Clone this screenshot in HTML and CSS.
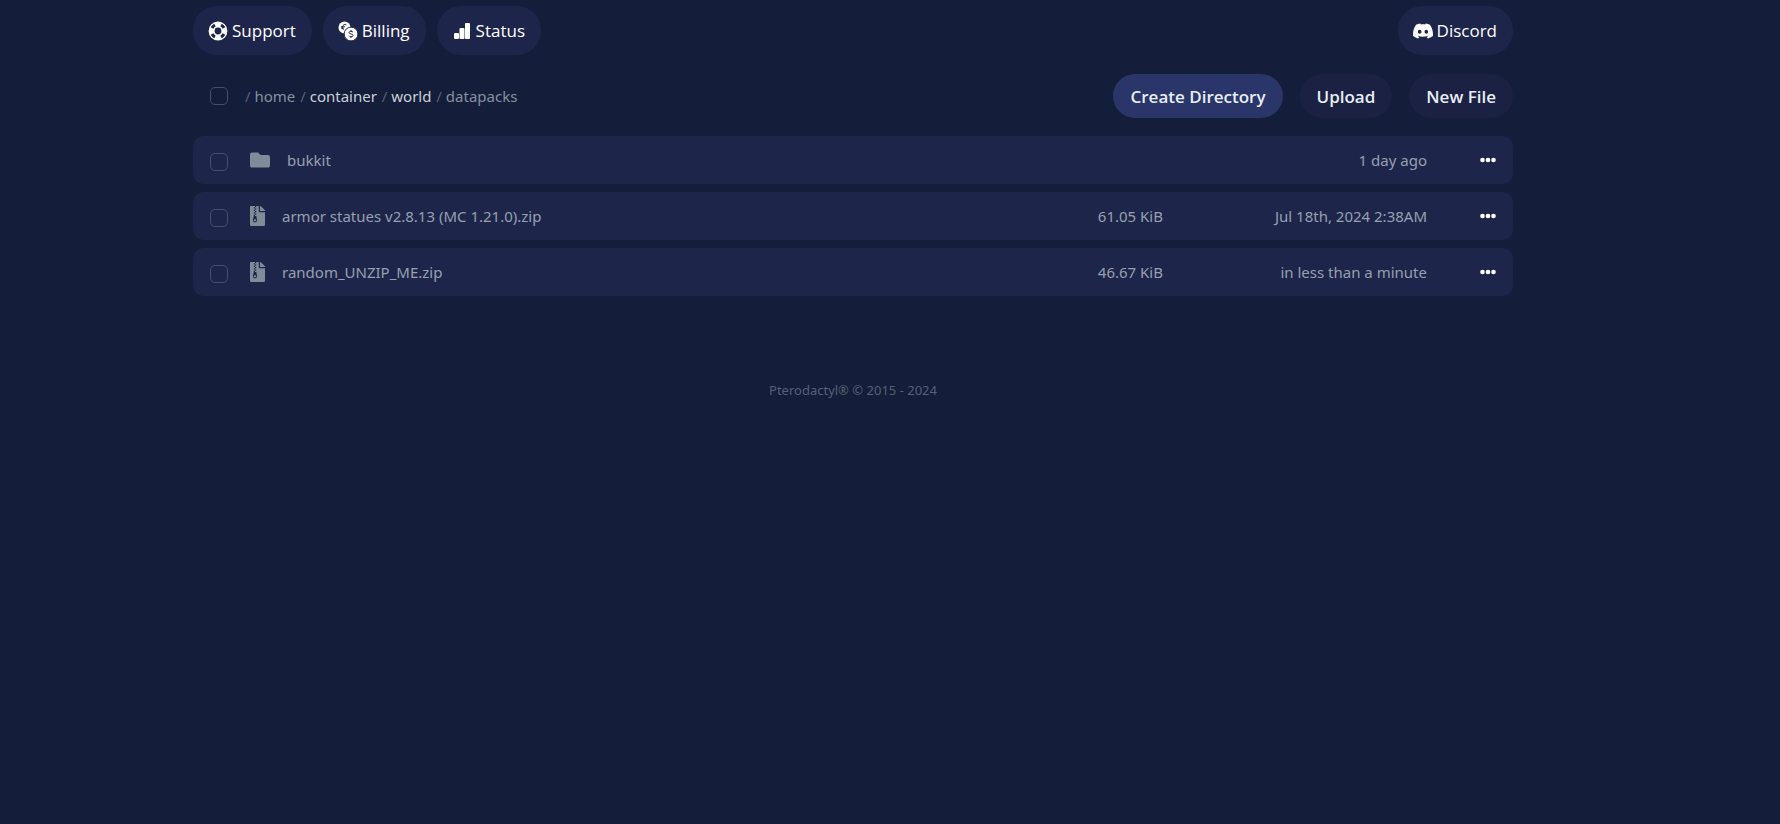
FILE: index.html
```
<!DOCTYPE html>
<html lang="en">
<head>
    <meta charset="UTF-8">
    <meta name="viewport" content="width=device-width, initial-scale=1.0">
    <title>File Manager</title>
    <link rel="stylesheet" href="styles.css">
</head>
<body>
    <svg class="sprite" aria-hidden="true">
        <symbol id="icon-zip" viewBox="0 0 384 512">
            <path d="M377 105L279.1 7c-4.5-4.5-10.6-7-17-7H256v128h128v-6.1c0-6.3-2.5-12.4-7-16.9zM128.4 336c-17.9 0-32.4 12.1-32.4 27 0 15 14.6 27 32.5 27s32.4-12.1 32.4-27-14.6-27-32.5-27zM224 136V0h-63.6v32h-32V0H24C10.7 0 0 10.7 0 24v464c0 13.3 10.7 24 24 24h336c13.3 0 24-10.7 24-24V160H248c-13.2 0-24-10.8-24-24zM95.9 32h32v32h-32zm32.3 384c-33.2 0-58-30.4-51.4-62.9L96.4 256v-32h32v-32h-32v-32h32v-32h-32V96h32V64h32v32h-32v32h32v32h-32v32h32v32h-32v32h22.1c5.7 0 10.7 4.1 11.8 9.7l17.3 87.7c6.4 32.4-18.4 62.6-51.4 62.6z"/>
        </symbol>
        <symbol id="icon-dots" viewBox="0 0 16 6">
            <circle cx="2.5" cy="3" r="2.3"/>
            <circle cx="8" cy="3" r="2.3"/>
            <circle cx="13.5" cy="3" r="2.3"/>
        </symbol>
    </svg>

    <div class="container">
        <nav class="links">
            <a href="#" class="pill">
                <svg class="pill-icon" viewBox="0 0 20 20">
                    <circle cx="10" cy="10" r="6.4" fill="none" stroke="currentColor" stroke-width="6"/>
                    <circle cx="10" cy="10" r="6.7" pathLength="40" class="ring-gap"/>
                </svg>
                Support
            </a>
            <a href="#" class="pill">
                <svg class="pill-icon" viewBox="0 0 20 20">
                    <circle cx="6.5" cy="6.5" r="6"/>
                    <path class="coin-mark" d="M8.4 3.9a2.8 2.8 0 1 0-2.8 5M3 5.8h4M3 7.2h3"/>
                    <circle class="coin-front" cx="13" cy="13" r="6.9"/>
                    <path class="coin-mark" d="M15 11.3c-.4-.7-1.1-1-2-1-1.1 0-2 .5-2 1.3 0 1.9 4.1.8 4.1 2.8 0 .8-.9 1.3-2.1 1.3-1 0-1.8-.4-2.1-1.1M13 9v1.3M13 15.7v1.3"/>
                </svg>
                Billing
            </a>
            <a href="#" class="pill">
                <svg class="pill-icon" viewBox="0 0 20 20">
                    <rect x="2" y="12" width="5" height="6" rx="1"/>
                    <rect x="7.5" y="7" width="5" height="11" rx="1"/>
                    <rect x="13" y="2" width="5" height="16" rx="1"/>
                </svg>
                Status
            </a>
            <a href="#" class="pill pill-right">
                <svg class="pill-icon" viewBox="0 0 24 24">
                    <path d="M20.317 4.3698a19.7913 19.7913 0 00-4.8851-1.5152.0741.0741 0 00-.0785.0371c-.211.3753-.4447.8648-.6083 1.2495-1.8447-.2762-3.68-.2762-5.4868 0-.1636-.3933-.4058-.8742-.6177-1.2495a.077.077 0 00-.0785-.037 19.7363 19.7363 0 00-4.8852 1.515.0699.0699 0 00-.0321.0277C.5334 9.0458-.319 13.5799.0992 18.0578a.0824.0824 0 00.0312.0561c2.0528 1.5076 4.0413 2.4228 5.9929 3.0294a.0777.0777 0 00.0842-.0276c.4616-.6304.8731-1.2952 1.226-1.9942a.076.076 0 00-.0416-.1057c-.6528-.2476-1.2743-.5495-1.8722-.8923a.077.077 0 01-.0076-.1277c.1258-.0943.2517-.1923.3718-.2914a.0743.0743 0 01.0776-.0105c3.9278 1.7933 8.18 1.7933 12.0614 0a.0739.0739 0 01.0785.0095c.1202.099.246.1981.3728.2924a.077.077 0 01-.0066.1276 12.2986 12.2986 0 01-1.873.8914.0766.0766 0 00-.0407.1067c.3604.698.7719 1.3628 1.225 1.9932a.076.076 0 00.0842.0286c1.961-.6067 3.9495-1.5219 6.0023-3.0294a.077.077 0 00.0313-.0552c.5004-5.177-.8382-9.6739-3.5485-13.6604a.061.061 0 00-.0312-.0286zM8.02 15.3312c-1.1825 0-2.1569-1.0857-2.1569-2.419 0-1.3332.9555-2.4189 2.157-2.4189 1.2108 0 2.1757 1.0952 2.1568 2.419 0 1.3332-.9555 2.4189-2.1569 2.4189zm7.9748 0c-1.1825 0-2.1569-1.0857-2.1569-2.419 0-1.3332.9554-2.4189 2.1569-2.4189 1.2108 0 2.1757 1.0952 2.1568 2.419 0 1.3332-.946 2.4189-2.1568 2.4189Z"/>
                </svg>
                Discord
            </a>
        </nav>

        <div class="toolbar">
            <input type="checkbox" class="check" aria-label="Select all files">
            <div class="breadcrumbs">
                /
                <span class="crumb">home</span>
                /
                <a href="#" class="crumb crumb-link">container</a>
                /
                <a href="#" class="crumb crumb-link">world</a>
                /
                <span class="crumb">datapacks</span>
            </div>
            <div class="actions">
                <button class="btn btn-primary">Create Directory</button>
                <button class="btn">Upload</button>
                <button class="btn">New File</button>
            </div>
        </div>

        <main class="files">
            <div class="file-row">
                <input type="checkbox" class="check" aria-label="Select bukkit">
                <svg class="folder-icon" viewBox="0 0 512 512">
                    <path d="M464 128H272l-64-64H48C21.49 64 0 85.49 0 112v288c0 26.51 21.49 48 48 48h416c26.51 0 48-21.49 48-48V176c0-26.51-21.49-48-48-48z"/>
                </svg>
                <a href="#" class="file-name">bukkit</a>
                <span class="file-date">1 day ago</span>
                <button class="menu-btn" aria-label="More actions"><svg><use href="#icon-dots"/></svg></button>
            </div>
            <div class="file-row">
                <input type="checkbox" class="check" aria-label="Select armor statues v2.8.13 (MC 1.21.0).zip">
                <svg class="zip-icon"><use href="#icon-zip"/></svg>
                <a href="#" class="file-name">armor statues v2.8.13 (MC 1.21.0).zip</a>
                <span class="file-size">61.05 KiB</span>
                <span class="file-date">Jul 18th, 2024 2:38AM</span>
                <button class="menu-btn" aria-label="More actions"><svg><use href="#icon-dots"/></svg></button>
            </div>
            <div class="file-row">
                <input type="checkbox" class="check" aria-label="Select random_UNZIP_ME.zip">
                <svg class="zip-icon"><use href="#icon-zip"/></svg>
                <a href="#" class="file-name">random_UNZIP_ME.zip</a>
                <span class="file-size">46.67 KiB</span>
                <span class="file-date">in less than a minute</span>
                <button class="menu-btn" aria-label="More actions"><svg><use href="#icon-dots"/></svg></button>
            </div>
        </main>

        <footer class="footer">Pterodactyl® © 2015 - 2024</footer>
    </div>
</body>
</html>
```
FILE: styles.css
```
* {
    box-sizing: border-box;
}
body {
    margin: 0;
    padding: 6px 74px 0 0;
    background: #141d39;
    color: #96a0ae;
    font-family: "Noto Sans", "Open Sans", sans-serif;
    font-size: 15px;
}
a {
    color: inherit;
    text-decoration: none;
}
svg {
    display: block;
    flex-shrink: 0;
    fill: currentColor;
}
.sprite {
    position: absolute;
    width: 0;
    height: 0;
}
.container {
    max-width: 1320px;
    margin: 0 auto;
}
.links {
    display: flex;
    gap: 11px;
}
.pill {
    display: flex;
    align-items: center;
    gap: 4px;
    height: 49px;
    padding: 0 16px 0 15px;
    border-radius: 24px;
    background: #1e254a;
    color: #fff;
    font-family: "Open Sans", sans-serif;
    font-size: 17px;
}
.pill-right {
    margin-left: auto;
}
.pill-icon {
    width: 20px;
    height: 20px;
}
.ring-gap {
    fill: none;
    stroke: #1e254a;
    stroke-width: 3;
    stroke-dasharray: 4 6;
    stroke-dashoffset: -3;
}
.coin-front {
    stroke: #1e254a;
    stroke-width: 1;
}
.coin-mark {
    fill: none;
    stroke: #1e254a;
    stroke-width: 1;
}
.toolbar {
    display: flex;
    align-items: center;
    margin: 19px 0 18px;
    padding-left: 17px;
}
.check {
    appearance: none;
    flex-shrink: 0;
    width: 18px;
    height: 18px;
    margin: 0;
    border: 1px solid #465069;
    border-radius: 5px;
}
.breadcrumbs {
    margin-left: 17px;
    color: #566078;
}
.crumb {
    margin-right: 1px;
    color: #8591a1;
}
.crumb-link {
    color: #cad1d8;
}
.actions {
    display: flex;
    gap: 17px;
    margin-left: auto;
}
.btn {
    height: 44px;
    padding: 0 17px;
    border: none;
    border-radius: 22px;
    background: #1b2143;
    color: #e8edf4;
    font-family: "Open Sans", sans-serif;
    font-size: 17px;
    font-weight: 600;
}
.btn-primary {
    background: #2a3669;
}
.files {
    display: grid;
    gap: 8px;
}
.file-row {
    display: flex;
    align-items: center;
    height: 48px;
    padding: 0 17px;
    border-radius: 10px;
    background: #1e254a;
}
.file-row .check {
    margin: 4px 22px 0 0;
}
.folder-icon,
.zip-icon {
    height: 20px;
    margin-right: 17px;
    color: #7f8b98;
}
.folder-icon {
    width: 20px;
}
.zip-icon {
    width: 15px;
}
.file-name {
    flex: 1;
}
.file-size {
    white-space: nowrap;
}
.file-date {
    width: 264px;
    text-align: right;
}
.menu-btn {
    margin-left: 53px;
    padding: 0;
    border: none;
    background: none;
    color: #fff;
}
.menu-btn svg {
    width: 16px;
    height: 6px;
}
.footer {
    margin-top: 85px;
    color: #566078;
    font-size: 13px;
    text-align: center;
}
```
